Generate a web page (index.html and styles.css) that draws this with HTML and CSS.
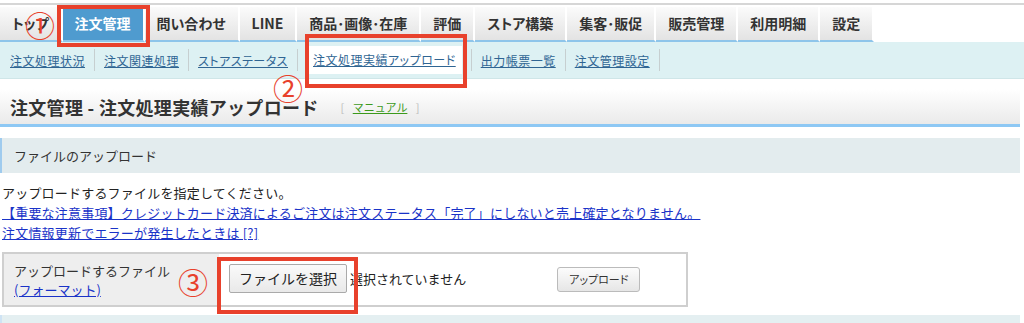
FILE: index.html
```html
<!DOCTYPE html>
<html lang="ja">
<head>
    <meta charset="UTF-8">
    <title>注文管理 - 注文処理実績アップロード</title>
    <link rel="stylesheet" href="styles.css">
</head>
<body>
<div class="page">

    <!-- グローバルナビ -->
    <div class="gnav">
        <ul class="tabs">
            <li class="tab">トップ</li>
            <li class="tab active">注文管理</li>
            <li class="tab">問い合わせ</li>
            <li class="tab">LINE</li>
            <li class="tab">商品･画像･在庫</li>
            <li class="tab">評価</li>
            <li class="tab">ストア構築</li>
            <li class="tab">集客･販促</li>
            <li class="tab">販売管理</li>
            <li class="tab">利用明細</li>
            <li class="tab">設定</li>
        </ul>
    </div>

    <!-- サブナビ -->
    <div class="subnav">
        <a href="#">注文処理状況</a><span class="sep"></span>
        <a href="#">注文関連処理</a><span class="sep"></span>
        <a href="#">ストアステータス</a><span class="sep"></span>
        <a href="#" class="current">注文処理実績アップロード</a><span class="sep"></span>
        <a href="#">出力帳票一覧</a><span class="sep"></span>
        <a href="#">注文管理設定</a><span class="sep"></span>
    </div>

    <div class="title-bar">
        <h1>注文管理 - 注文処理実績アップロード</h1>
        <span class="manual">[ <a href="#">マニュアル</a> ]</span>
    </div>

    <h2 class="section-head">ファイルのアップロード</h2>

    <div class="notes">
        <p>アップロードするファイルを指定してください。</p>
        <a href="#">【重要な注意事項】クレジットカード決済によるご注文は注文ステータス「完了」にしないと売上確定となりません。</a><br>
        <a href="#">注文情報更新でエラーが発生したときは [?]</a>
    </div>

    <table class="upload-table">
        <tr>
            <th>アップロードするファイル<br><a href="#">(フォーマット)</a></th>
            <td>
                <button class="file-btn">ファイルを選択</button><span class="file-name">選択されていません</span>
                <button class="upload-btn">アップロード</button>
            </td>
        </tr>
    </table>

    <div class="section-head next"></div>

    <!-- 注釈（赤枠と番号） -->
    <div class="mark box1"></div>
    <span class="num num1">①</span>
    <div class="mark box2"></div>
    <span class="num num2">②</span>
    <div class="mark box3"></div>
    <span class="num num3">③</span>
</div>
</body>
</html>
```

FILE: styles.css
```css
body {
    margin: 0;
    font-family: "Noto Sans CJK JP", sans-serif;
    font-size: 13px;
    color: #333;
    background-color: #fff;
}
.page {
    position: relative;
    width: 1020px;
}

/* グローバルナビ */
.gnav {
    margin: 3px -4px 0 0;
    padding-top: 2px;
    border-top: 2px solid #d6d6d6;
}
.tabs {
    display: flex;
    margin: 0;
    padding: 0;
    list-style: none;
}
.tab {
    height: 33px;
    line-height: 33px;
    padding: 0 12px;
    font-size: 14px;
    font-weight: bold;
    font-feature-settings: "palt";
    color: #333;
    background: linear-gradient(#fbfbfb, #e3e3e3);
    border-right: 2px solid #fff;
    border-bottom: 2px solid #8ec5ea;
}
.tab.active {
    background: #4f9bcf;
    color: #fff;
}

/* サブナビ */
.subnav {
    display: flex;
    align-items: center;
    height: 36px;
    margin-right: -4px;
    padding-left: 10px;
    background-color: #ddf1f3;
    border-bottom: 1px solid #cfe6e8;
}
.subnav a {
    font-size: 12px;
    color: #2f6593;
    font-feature-settings: "palt";
    letter-spacing: 0.5px;
}
.subnav a.current {
    background-color: #fff;
    height: 28px;
    line-height: 28px;
    padding: 0 6px;
}
.subnav .sep {
    width: 1px;
    height: 22px;
    margin: 0 9px;
    background-color: #c6cfd0;
}

/* タイトル */
.title-bar {
    display: flex;
    align-items: center;
    height: 35px;
    margin-top: 10px;
    padding-left: 10px;
    background: linear-gradient(#fff, #eaeaea);
    border-bottom: 3px solid #8ec8f4;
}
.title-bar h1 {
    margin: 0;
    font-size: 18px;
    color: #333;
    letter-spacing: 0.3px;
}
.manual {
    margin-left: 22px;
    font-size: 11px;
    color: #bbb;
    word-spacing: 6px;
}
.manual a {
    color: #3c9a1c;
    word-spacing: 0;
}

/* 見出し */
.section-head {
    height: 35px;
    line-height: 35px;
    margin: 11px 0 0;
    padding-left: 12px;
    font-size: 13px;
    font-weight: normal;
    background-color: #e3ecee;
    border-left: 2px solid #9fcbee;
}
.section-head.next {
    height: 20px;
    margin-top: 8px;
    background-color: #e4eff1;
    border-left-color: #cfe3f4;
}

/* 説明文 */
.notes {
    margin-top: 10px;
    padding-left: 2px;
    line-height: 20px;
    letter-spacing: 0.2px;
}
.notes p {
    margin: 0;
    color: #222;
}
.notes a {
    color: #1a33c8;
}

/* アップロード欄 */
.upload-table {
    margin: 9px 0 0 2px;
    width: 686px;
    height: 55px;
    border: 2px solid #cfcfcf;
    border-collapse: collapse;
}
.upload-table th {
    width: 195px;
    padding: 4px 10px;
    text-align: left;
    font-weight: normal;
    line-height: 19px;
    background-color: #eee;
    vertical-align: middle;
}
.upload-table th a {
    color: #1a33c8;
}
.upload-table td {
    padding: 0 0 3px 10px;
    vertical-align: middle;
}
.file-btn {
    height: 29px;
    padding: 0 9px;
    font-family: inherit;
    font-size: 14px;
    color: #222;
    background: linear-gradient(#fafafa, #e9e9e9);
    border: 1px solid #aaa;
    border-radius: 2px;
}
.file-name {
    margin-left: 3px;
    font-size: 13px;
    color: #222;
}
.upload-btn {
    height: 25px;
    margin-left: 88px;
    padding: 0 11px;
    font-family: inherit;
    font-size: 11px;
    font-feature-settings: "palt";
    color: #333;
    background: linear-gradient(#fcfcfc, #e6e6e6);
    border: 1px solid #bbb;
    border-radius: 3px;
}

/* 注釈 */
.mark {
    position: absolute;
    box-sizing: border-box;
    border: 4px solid #e8412c;
}
.box1 { left: 57px; top: 2px; width: 93px; height: 42px; }
.box2 { left: 305px; top: 31px; width: 162px; height: 54px; }
.box3 { left: 217px; top: 254px; width: 141px; height: 57px; }
.num {
    position: absolute;
    font-size: 30px;
    line-height: 1;
    color: #e8412c;
}
.num1 { left: 25px; top: 6px; }
.num2 { left: 273px; top: 69px; }
.num3 { left: 178px; top: 263px; }
```
